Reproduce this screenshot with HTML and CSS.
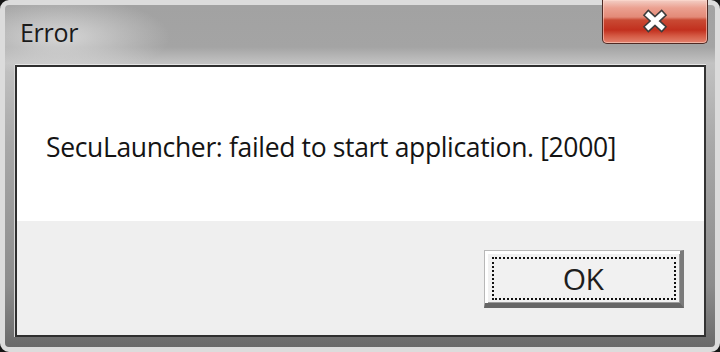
FILE: index.html
```html
<!DOCTYPE html>
<html>
<head>
<meta charset="utf-8">
<link rel="stylesheet" href="styles.css">
</head>
<body>
<div class="window">
  <div class="titlebar">
    <span class="title">Error</span>
    <button class="close" aria-label="Close">
      <svg width="26" height="24" viewBox="0 0 26 24">
        <path d="M6.5 6 L19.5 18 M19.5 6 L6.5 18" stroke="#3c3c3c" stroke-width="8" stroke-linecap="square" fill="none"/>
        <path d="M6.5 6 L19.5 18 M19.5 6 L6.5 18" stroke="#ffffff" stroke-width="5" stroke-linecap="square" fill="none"/>
      </svg>
    </button>
  </div>
  <div class="client">
    <div class="message">
      <p class="text">SecuLauncher: failed to start application. [2000]</p>
    </div>
    <div class="actions">
      <button class="ok"><span class="focus">OK</span></button>
    </div>
  </div>
</div>
</body>
</html>
```

FILE: styles.css
```css
html, body {
  margin: 0;
  padding: 0;
  background: #151515;
}

.window {
  position: relative;
  width: 720px;
  height: 352px;
  box-sizing: border-box;
  border: 5px solid #dcdcdc;
  border-radius: 9px;
  background:
    radial-gradient(ellipse 110px 40px at 55px 32px, rgba(235,235,235,0.7), rgba(235,235,235,0) 100%),
    linear-gradient(to bottom, #a2a2a2 0px, #a4a4a4 42px, #c2c2c2 58px, #a8a8a8 140px, #8c8c8c 280px, #6a6a6a 100%);
  padding: 0 10px 10px 10px;
  display: flex;
  flex-direction: column;
  font-family: "Open Sans", "Noto Sans", sans-serif;
}

.titlebar {
  height: 60px;
  display: flex;
  align-items: flex-start;
  padding-top: 12px;
  box-sizing: border-box;
}

.title {
  font-size: 25px;
  color: #1a1a1a;
  line-height: 30px;
  margin-left: 5px;
  letter-spacing: -0.3px;
}

.close {
  position: absolute;
  top: -5px;
  right: 7px;
  width: 106px;
  height: 44px;
  box-sizing: border-box;
  border: 1px solid #4e2a24;
  border-top: none;
  border-radius: 0 0 5px 5px;
  background: linear-gradient(to bottom, #f3cfc6 0px, #eba090 8px, #e38a78 17px, #c94a34 20px, #c2301e 30px, #d55b45 36px, #e4836f 43px);
  box-shadow: inset 0 0 0 1px rgba(255,220,210,0.55);
  display: flex;
  align-items: center;
  justify-content: center;
  padding: 0;
}

.close svg {
  display: block;
  margin-top: -2px;
}

.client {
  flex: 1;
  display: flex;
  flex-direction: column;
  border: 2px solid #2f2f2f;
  border-right-color: #333;
  box-shadow: 0 -1px 0 #e6e6e6, -1px 0 0 #d6d6d6;
  margin-right: -1px;
}

.message {
  height: 154px;
  background: #ffffff;
  display: flex;
  align-items: center;
  padding-left: 29px;
}

.text {
  margin: 6px 0 0 0;
  font-size: 26.5px;
  color: #141414;
  letter-spacing: -0.35px;
}

.actions {
  flex: 1;
  background: #efefef;
  display: flex;
  justify-content: flex-end;
  align-items: flex-start;
  padding: 29px 20px 0 0;
}

.ok {
  width: 200px;
  height: 58px;
  box-sizing: border-box;
  border-style: solid;
  border-width: 1px 4px 5px 1px;
  border-color: #b8b8b8 #7a7a7a #666666 #b8b8b8;
  box-shadow: inset 3px 3px 0 #ffffff, inset -1px -1px 0 #9c9c9c;
  background: #f1f1f1;
  padding: 6px 4px 3px 7px;
  display: flex;
  font-family: "Open Sans", "Noto Sans", sans-serif;
}

.focus {
  flex: 1;
  border: 2px dotted #111;
  display: flex;
  align-items: center;
  justify-content: center;
  font-size: 30px;
  color: #1e1e1e;
  padding-right: 2px;
  letter-spacing: -0.5px;
}
```
